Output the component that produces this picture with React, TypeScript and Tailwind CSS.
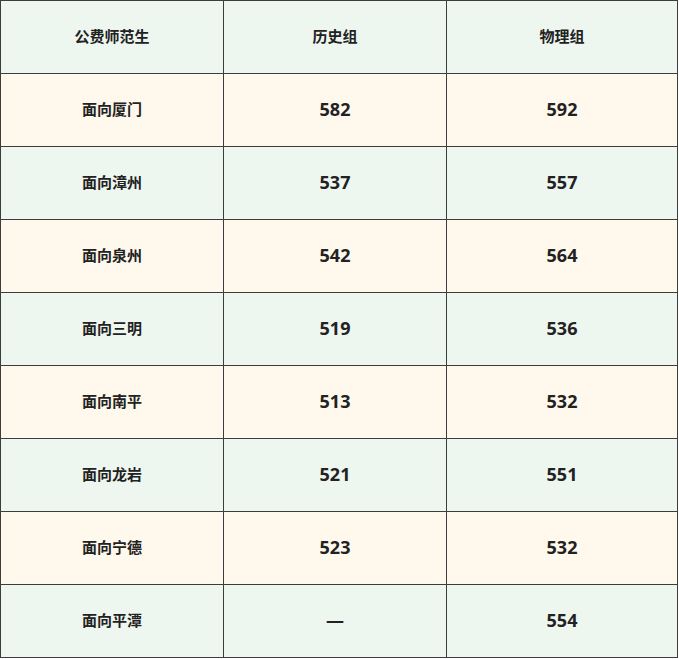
import React from 'react';

const rows = [
  { name: '面向厦门', history: '582', physics: '592' },
  { name: '面向漳州', history: '537', physics: '557' },
  { name: '面向泉州', history: '542', physics: '564' },
  { name: '面向三明', history: '519', physics: '536' },
  { name: '面向南平', history: '513', physics: '532' },
  { name: '面向龙岩', history: '521', physics: '551' },
  { name: '面向宁德', history: '523', physics: '532' },
  { name: '面向平潭', history: '—', physics: '554' },
];

export default function App() {
  return (
    <div className="bg-white w-[679px] h-[659px] font-['Open_Sans','Noto_Sans_CJK_SC',sans-serif] text-[#222]">
      <table className="border-collapse w-[678px] table-fixed">
        <colgroup>
          <col className="w-[223px]" />
          <col className="w-[223px]" />
          <col />
        </colgroup>
        <thead>
          <tr className="h-[73px] bg-[#eef6f0]">
            <th className="border border-[#3d3d3d] text-[15px] font-semibold pb-[2px]">公费师范生</th>
            <th className="border border-[#3d3d3d] text-[15px] font-semibold pb-[2px]">历史组</th>
            <th className="border border-[#3d3d3d] text-[15px] font-semibold pb-[2px]">物理组</th>
          </tr>
        </thead>
        <tbody>
          {rows.map((row, i) => (
            <tr
              key={row.name}
              className={`h-[73px] ${i % 2 === 0 ? 'bg-[#fff8ec]' : 'bg-[#eef6f0]'}`}
            >
              <td className="border border-[#3d3d3d] text-center text-[15px] font-bold pb-[2px]">{row.name}</td>
              <td className="border border-[#3d3d3d] text-center text-[18px] font-bold pb-[2px]">{row.history}</td>
              <td className="border border-[#3d3d3d] text-center text-[18px] font-bold pb-[2px]">{row.physics}</td>
            </tr>
          ))}
        </tbody>
      </table>
    </div>
  );
}
